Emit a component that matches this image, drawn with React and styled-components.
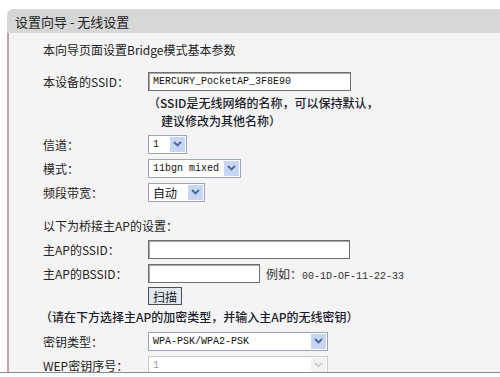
import React from "react";
import styled, { createGlobalStyle } from "styled-components";

const GlobalStyle = createGlobalStyle`
  html, body {
    margin: 0;
    padding: 0;
    background: #ffffff;
  }
  body {
    width: 500px;
    height: 377px;
    overflow: hidden;
    font-family: "Noto Sans CJK SC", "Liberation Sans", sans-serif;
    font-size: 12px;
    color: #222;
  }
`;

const Page = styled.div`
  box-sizing: border-box;
  height: 377px;
  overflow: hidden;
  padding-top: 9px;
  padding-left: 7px;
`;

const Header = styled.div`
  height: 24px;
  background: #d7d7d7;
  border-top-left-radius: 6px;
  display: flex;
  align-items: center;
  padding-left: 8px;
  font-size: 13px;
  color: #1e1e1e;
`;

const Body = styled.div`
  background: #f4f4f4;
  border-left: 2px solid #c9a3a3;
  padding: 4px 0 0 34px;
  height: 340px;
`;

const Row = styled.div`
  display: flex;
  align-items: center;
  height: ${(p) => p.$h || 24}px;
  margin-top: ${(p) => p.$mt || 0}px;
`;

const Label = styled.div`
  width: 105px;
  flex: none;
  color: #222;
`;

const Note = styled.div`
  height: 18px;
  display: flex;
  align-items: center;
  padding-left: ${(p) => p.$indent || 0}px;
  margin-left: ${(p) => p.$shift || 0}px;
  color: #1b1b2b;
  font-weight: 500;
`;

const TextInput = styled.div`
  box-sizing: border-box;
  width: ${(p) => p.$w}px;
  height: 19px;
  background: #fff;
  border: 1px solid #6f6f6f;
  box-shadow: inset 1px 1px 0 #a8a8a8;
  display: flex;
  align-items: center;
  padding-left: 4px;
  font-family: "Liberation Mono", monospace;
  font-size: 10px;
  color: #111;
`;

const Select = styled.div`
  box-sizing: border-box;
  width: ${(p) => p.$w}px;
  height: 19px;
  background: #fff;
  border: 1px solid ${(p) => (p.$disabled ? "#c8ccd2" : "#9aa6b6")};
  display: flex;
  align-items: stretch;
  color: ${(p) => (p.$disabled ? "#a0a0a0" : "#111")};
`;

const SelectValue = styled.div`
  flex: 1;
  display: flex;
  align-items: center;
  padding-left: 4px;
  font-family: ${(p) =>
    p.$cjk ? `"Noto Sans CJK SC", sans-serif` : `"Liberation Mono", monospace`};
  font-size: ${(p) => (p.$cjk ? 12 : 10)}px;
`;

const ArrowBox = styled.div`
  width: 15px;
  margin: 1px;
  background: ${(p) => (p.$disabled ? "#f2f2f2" : "#c6d6f4")};
  display: flex;
  align-items: center;
  justify-content: center;
`;

const Hint = styled.span`
  margin-left: 6px;
  color: #333;
  font-family: "Liberation Mono", "Noto Sans CJK SC", monospace;
  font-size: 10px;
`;

const HintCjk = styled.span`
  font-family: "Noto Sans CJK SC", sans-serif;
  font-size: 12px;
`;

const Button = styled.div`
  box-sizing: border-box;
  width: 34px;
  height: 18px;
  border: 1px solid #4f4f4f;
  background: #e1e8ee;
  display: flex;
  align-items: center;
  justify-content: center;
  color: #222;
`;

const Footer = styled.div`
  position: absolute;
  left: 0;
  right: 0;
  top: 372px;
  height: 4px;
  background: #fff;
  border-top: 1px solid #8a8a8a;
`;

const Chevron = ({ disabled }) => (
  <svg width="9" height="6" viewBox="0 0 9 6">
    <path
      d="M1 1 L4.5 4.5 L8 1"
      fill="none"
      stroke={disabled ? "#cfcfcf" : "#4a6696"}
      strokeWidth="1.8"
    />
  </svg>
);

const Dropdown = ({ w, value, cjk, disabled }) => (
  <Select $w={w} $disabled={disabled}>
    <SelectValue $cjk={cjk}>{value}</SelectValue>
    <ArrowBox $disabled={disabled}>
      <Chevron disabled={disabled} />
    </ArrowBox>
  </Select>
);

const App = () => {
  return (
    <>
      <GlobalStyle />
      <Page>
        <Header>设置向导 - 无线设置</Header>
        <Body>
          <Row>本向导页面设置Bridge模式基本参数</Row>
          <Row $mt={8}>
            <Label>本设备的SSID：</Label>
            <TextInput $w={203}>MERCURY_PocketAP_3F8E90</TextInput>
          </Row>
          <Note $indent={105}>（SSID是无线网络的名称，可以保持默认，</Note>
          <Note $indent={118}>建议修改为其他名称）</Note>
          <Row $mt={3}>
            <Label>信道：</Label>
            <Dropdown w={39} value="1" />
          </Row>
          <Row>
            <Label>模式：</Label>
            <Dropdown w={93} value="11bgn mixed" />
          </Row>
          <Row>
            <Label>频段带宽：</Label>
            <Dropdown w={57} value="自动" cjk />
          </Row>
          <Row $mt={9}>以下为桥接主AP的设置：</Row>
          <Row>
            <Label>主AP的SSID：</Label>
            <TextInput $w={202} />
          </Row>
          <Row>
            <Label>主AP的BSSID：</Label>
            <TextInput $w={112} />
            <Hint>
              <HintCjk>例如：</HintCjk>00-1D-OF-11-22-33
            </Hint>
          </Row>
          <Row $h={22}>
            <Label />
            <Button>扫描</Button>
          </Row>
          <Note $shift={-3}>
            （请在下方选择主AP的加密类型，并输入主AP的无线密钥）
          </Note>
          <Row $mt={4}>
            <Label>密钥类型：</Label>
            <Dropdown w={180} value="WPA-PSK/WPA2-PSK" />
          </Row>
          <Row>
            <Label>WEP密钥序号：</Label>
            <Dropdown w={180} value="1" disabled />
          </Row>
        </Body>
      </Page>
      <Footer />
    </>
  );
};

export default App;
